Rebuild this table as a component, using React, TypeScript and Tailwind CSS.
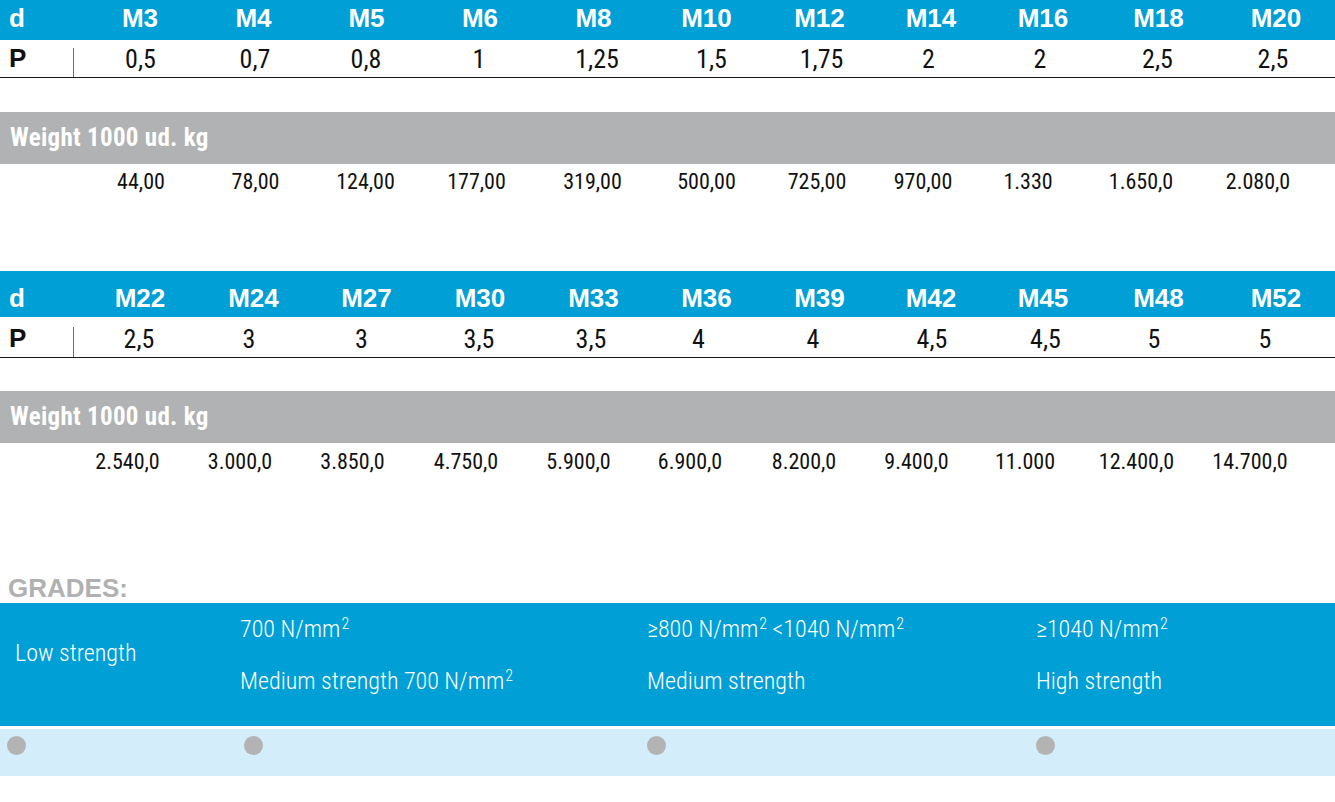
const block1 = {
  d: ['M3', 'M4', 'M5', 'M6', 'M8', 'M10', 'M12', 'M14', 'M16', 'M18', 'M20'],
  p: ['0,5', '0,7', '0,8', '1', '1,25', '1,5', '1,75', '2', '2', '2,5', '2,5'],
  w: ['44,00', '78,00', '124,00', '177,00', '319,00', '500,00', '725,00', '970,00', '1.330', '1.650,0', '2.080,0'],
};

const block2 = {
  d: ['M22', 'M24', 'M27', 'M30', 'M33', 'M36', 'M39', 'M42', 'M45', 'M48', 'M52'],
  p: ['2,5', '3', '3', '3,5', '3,5', '4', '4', '4,5', '4,5', '5', '5'],
  w: ['2.540,0', '3.000,0', '3.850,0', '4.750,0', '5.900,0', '6.900,0', '8.200,0', '9.400,0', '11.000', '12.400,0', '14.700,0'],
};

const HEAD_GRID = 'grid grid-cols-[83px_114px_113px_113px_114px_113px_113px_113px_110px_114px_117px_1fr]';
const P1_GRID = 'grid grid-cols-[83px_115px_114px_108px_118px_118px_111px_109px_105px_118px_117px_114px_1fr]';
const P2_GRID = 'grid grid-cols-[83px_112px_108px_117px_118px_106px_109px_120px_118px_109px_108px_114px_1fr]';
const W1_GRID = 'grid grid-cols-[83px_116px_113px_107px_115px_117px_111px_110px_102px_108px_118px_116px_1fr]';
const W2_GRID = 'grid grid-cols-[71px_113px_112px_113px_114px_111px_112px_116px_109px_108px_115px_112px_1fr]';

const headFont = "font-['Liberation_Sans',Arial,sans-serif] font-bold";
const numFont = "font-['Roboto_Condensed','Roboto',sans-serif]";

type BlockData = { d: string[]; p: string[]; w: string[] };

function Block({
  data,
  headH,
  headPb,
  pH,
  pGrid,
  sepH,
  gap,
  wGrid,
  wRow,
}: {
  data: BlockData;
  headH: string;
  headPb: string;
  pH: string;
  pGrid: string;
  sepH: string;
  gap: string;
  wGrid: string;
  wRow: string;
}) {
  return (
    <div>
      <div className={`${HEAD_GRID} ${headH} ${headPb} items-end bg-[#009fd6] text-white text-[26px] leading-[1.15] ${headFont}`}>
        <div className="pl-[9px]">d</div>
        {data.d.map((v, i) => (
          <div key={i} className="text-center">
            {v}
          </div>
        ))}
      </div>
      <div className={`${pGrid} ${pH} items-end border-b border-[#1a1a1a] text-[#111]`}>
        <div className="flex h-full items-end">
          <div className={`flex-1 pl-[9px] pb-[3px] text-[26px] leading-[1.15] ${headFont}`}>P</div>
          <div className={`mr-[9px] w-px ${sepH} bg-[#6b6b6b]`} />
        </div>
        {data.p.map((v, i) => (
          <div key={i} className={`pb-[3px] text-center text-[26px] leading-[1.17] ${numFont}`}>
            {v}
          </div>
        ))}
      </div>
      <div className={gap} />
      <div className="flex h-[52px] items-center bg-[#b1b2b4] pl-[10px] text-white">
        <span className={`text-[25px] font-bold leading-[1.17] tracking-[0.3px] ${numFont}`}>Weight 1000 ud. kg</span>
      </div>
      <div className={`${wGrid} ${wRow} text-[#111] text-[22px] leading-[1.17] ${numFont}`}>
        <div />
        {data.w.map((v, i) => (
          <div key={i} className="text-center">
            {v}
          </div>
        ))}
      </div>
    </div>
  );
}

function Mm() {
  return (
    <>
      N/mm<sup className="ml-px text-[16px]">2</sup>
    </>
  );
}

export default function App() {
  return (
    <div className="h-[802px] w-[1335px] overflow-hidden bg-white">
      <Block
        data={block1}
        headH="h-[40px]"
        headPb="pb-[6px]"
        pH="h-[38px]"
        pGrid={P1_GRID}
        sepH="h-[29px]"
        gap="h-[34px]"
        wGrid={W1_GRID}
        wRow="h-[34px] pt-[5px]"
      />
      <div className="h-[73px]" />
      <Block
        data={block2}
        headH="h-[46px]"
        headPb="pb-[3px]"
        pH="h-[41px]"
        pGrid={P2_GRID}
        sepH="h-[30px]"
        gap="h-[33px]"
        wGrid={W2_GRID}
        wRow="h-[36px] pt-[6px]"
      />
      <div className="h-[94px]" />
      <div className="flex h-[30px] items-end pl-[8px] text-[26px] font-bold leading-[30px] text-[#b1b1b1] font-['Liberation_Sans',Arial,sans-serif]">
        GRADES:
      </div>
      <div className={`grid h-[123px] grid-cols-[232px_407px_389px_1fr] bg-[#009fd6] text-white text-[24px] font-light leading-[52px] ${numFont}`}>
        <div className="pl-[15px] pt-[24px]">Low strength</div>
        <div className="pl-[8px]">
          <div>
            700 <Mm />
          </div>
          <div>
            Medium strength 700 <Mm />
          </div>
        </div>
        <div className="pl-[8px]">
          <div>
            ≥800 <Mm /> &lt;1040 <Mm />
          </div>
          <div>Medium strength</div>
        </div>
        <div className="pl-[8px]">
          <div>
            ≥1040 <Mm />
          </div>
          <div>High strength</div>
        </div>
      </div>
      <div className="h-[3px]" />
      <div className="grid h-[47px] grid-cols-[232px_407px_389px_1fr] bg-[#d4edfb] pt-[7px]">
        <div className="ml-[7px] h-[19px] w-[19px] rounded-full bg-[#b3b3b3]" />
        <div className="ml-[12px] h-[19px] w-[19px] rounded-full bg-[#b3b3b3]" />
        <div className="ml-[8px] h-[19px] w-[19px] rounded-full bg-[#b3b3b3]" />
        <div className="ml-[8px] h-[19px] w-[19px] rounded-full bg-[#b3b3b3]" />
      </div>
    </div>
  );
}
